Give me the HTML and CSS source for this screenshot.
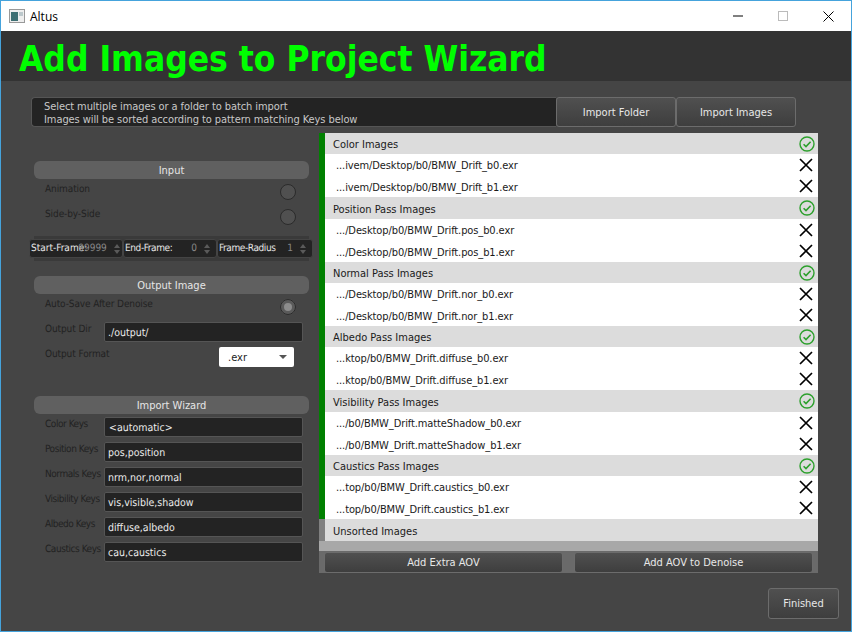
FILE: index.html
```html
<!DOCTYPE html>
<html lang="en">

<head>
    <meta charset="UTF-8">
    <meta name="viewport" content="width=device-width, initial-scale=1.0">
    <title>Altus</title>
    <link rel="stylesheet" href="styles.css">
</head>

<body>
    <svg class="defs" width="0" height="0">
        <symbol id="ok" viewBox="0 0 16 16">
            <circle cx="8" cy="8" r="7" fill="none" stroke="#2ca02c" stroke-width="1.4"/>
            <path d="M4.6 8.2 7 10.6 11.6 5.8" fill="none" stroke="#2ca02c" stroke-width="1.6"/>
        </symbol>
        <symbol id="del" viewBox="0 0 14 14">
            <path d="M1 1 13 13M13 1 1 13" fill="none" stroke="#000" stroke-width="1.7"/>
        </symbol>
    </svg>

    <div class="window">

        <div class="titlebar">
            <svg class="app-icon" width="16" height="16" viewBox="0 0 16 16">
                <rect x="0.5" y="1.5" width="15" height="13" fill="#eee" stroke="#999"/>
                <rect x="2" y="4" width="7" height="9" fill="#3d6f73"/>
                <rect x="10" y="4" width="4" height="4" fill="#bcc8cc"/>
            </svg>
            <span class="app-name">Altus</span>
            <div class="win-btns">
                <svg width="10" height="10" viewBox="0 0 10 10"><path d="M0 5H10" stroke="#000"/></svg>
                <svg width="10" height="10" viewBox="0 0 10 10"><rect x="0.5" y="0.5" width="9" height="9" fill="none" stroke="#bbb"/></svg>
                <svg width="11" height="11" viewBox="0 0 11 11"><path d="M0.5 0.5 10.5 10.5M10.5 0.5 0.5 10.5" stroke="#000"/></svg>
            </div>
        </div>

        <div class="banner">
            <h1>Add Images to Project Wizard</h1>
        </div>

        <main class="content">

            <div class="import-bar">
                <p class="import-help">Select multiple images or a folder to batch import<br>Images will be sorted according to pattern matching Keys below</p>
                <button class="btn import-btn">Import Folder</button>
                <button class="btn import-btn">Import Images</button>
            </div>

            <div class="columns">

                <div class="side">

                    <div class="section-head">Input</div>
                    <div class="check-row"><span class="label">Animation</span><span class="radio"></span></div>
                    <div class="check-row"><span class="label">Side-by-Side</span><span class="radio"></span></div>

                    <div class="spin-strip">
                        <div class="spin spin-start"><span class="spin-name">Start-Frame:</span><span class="spin-val">99999</span><span class="arrows"></span></div>
                        <div class="spin"><span class="spin-name">End-Frame:</span><span class="spin-val">0</span><span class="arrows"></span></div>
                        <div class="spin spin-last"><span class="spin-name">Frame-Radius</span><span class="spin-val">1</span><span class="arrows"></span></div>
                    </div>

                    <div class="section-head sec-output">Output Image</div>
                    <div class="check-row"><span class="label">Auto-Save After Denoise</span><span class="radio on"></span></div>
                    <div class="field-row"><span class="label">Output Dir</span><div class="input">./output/</div></div>
                    <div class="field-row format-row">
                        <span class="label">Output Format</span>
                        <div class="combo"><span>.exr</span><span class="combo-arrow"></span></div>
                    </div>

                    <div class="section-head sec-wizard">Import Wizard</div>
                    <div class="field-row key-row"><span class="label">Color Keys</span><div class="input indent">&lt;automatic&gt;</div></div>
                    <div class="field-row key-row"><span class="label">Position Keys</span><div class="input">pos,position</div></div>
                    <div class="field-row key-row"><span class="label">Normals Keys</span><div class="input">nrm,nor,normal</div></div>
                    <div class="field-row key-row"><span class="label">Visibility Keys</span><div class="input">vis,visible,shadow</div></div>
                    <div class="field-row key-row"><span class="label">Albedo Keys</span><div class="input">diffuse,albedo</div></div>
                    <div class="field-row key-row"><span class="label">Caustics Keys</span><div class="input">cau,caustics</div></div>

                </div>

                <div class="list-panel">
                    <div class="list">

                        <section class="group">
                            <div class="group-head"><span>Color Images</span><svg class="ok-icon"><use href="#ok"/></svg></div>
                            <div class="file"><span>...ivem/Desktop/b0/BMW_Drift_b0.exr</span><svg class="del-icon"><use href="#del"/></svg></div>
                            <div class="file"><span>...ivem/Desktop/b0/BMW_Drift_b1.exr</span><svg class="del-icon"><use href="#del"/></svg></div>
                        </section>

                        <section class="group tall">
                            <div class="group-head"><span>Position Pass Images</span><svg class="ok-icon"><use href="#ok"/></svg></div>
                            <div class="file"><span>.../Desktop/b0/BMW_Drift.pos_b0.exr</span><svg class="del-icon"><use href="#del"/></svg></div>
                            <div class="file"><span>.../Desktop/b0/BMW_Drift.pos_b1.exr</span><svg class="del-icon"><use href="#del"/></svg></div>
                        </section>

                        <section class="group">
                            <div class="group-head"><span>Normal Pass Images</span><svg class="ok-icon"><use href="#ok"/></svg></div>
                            <div class="file"><span>.../Desktop/b0/BMW_Drift.nor_b0.exr</span><svg class="del-icon"><use href="#del"/></svg></div>
                            <div class="file"><span>.../Desktop/b0/BMW_Drift.nor_b1.exr</span><svg class="del-icon"><use href="#del"/></svg></div>
                        </section>

                        <section class="group">
                            <div class="group-head"><span>Albedo Pass Images</span><svg class="ok-icon"><use href="#ok"/></svg></div>
                            <div class="file"><span>...ktop/b0/BMW_Drift.diffuse_b0.exr</span><svg class="del-icon"><use href="#del"/></svg></div>
                            <div class="file"><span>...ktop/b0/BMW_Drift.diffuse_b1.exr</span><svg class="del-icon"><use href="#del"/></svg></div>
                        </section>

                        <section class="group tall">
                            <div class="group-head"><span>Visibility Pass Images</span><svg class="ok-icon"><use href="#ok"/></svg></div>
                            <div class="file"><span>.../b0/BMW_Drift.matteShadow_b0.exr</span><svg class="del-icon"><use href="#del"/></svg></div>
                            <div class="file"><span>.../b0/BMW_Drift.matteShadow_b1.exr</span><svg class="del-icon"><use href="#del"/></svg></div>
                        </section>

                        <section class="group">
                            <div class="group-head"><span>Caustics Pass Images</span><svg class="ok-icon"><use href="#ok"/></svg></div>
                            <div class="file"><span>...top/b0/BMW_Drift.caustics_b0.exr</span><svg class="del-icon"><use href="#del"/></svg></div>
                            <div class="file"><span>...top/b0/BMW_Drift.caustics_b1.exr</span><svg class="del-icon"><use href="#del"/></svg></div>
                        </section>

                        <section class="group unsorted">
                            <div class="group-head"><span>Unsorted Images</span></div>
                        </section>

                    </div>
                    <div class="aov-btns">
                        <button class="btn aov-btn">Add Extra AOV</button>
                        <button class="btn aov-btn">Add AOV to Denoise</button>
                    </div>
                </div>

            </div>

            <div class="footer">
                <button class="btn finish-btn">Finished</button>
            </div>

        </main>

    </div>
</body>

</html>
```

FILE: styles.css
```css
* {
    margin: 0;
    padding: 0;
    box-sizing: border-box;
}

body {
    width: 852px;
    height: 632px;
    overflow: hidden;
    font-family: "DejaVu Sans Condensed", "DejaVu Sans", sans-serif;
    font-size: 11px;
    color: #e6e6e6;
}

.defs {
    display: block;
    height: 0;
}

.window {
    display: flex;
    flex-direction: column;
    width: 852px;
    height: 632px;
    border: 1px solid #45a3dc;
    background-color: #454545;
}

/* title bar */
.titlebar {
    display: flex;
    align-items: center;
    flex: 0 0 30px;
    background-color: white;
    color: black;
}

.app-icon {
    margin-left: 8px;
}

.app-name {
    margin-left: 5px;
    font-family: "Open Sans", sans-serif;
    font-size: 12px;
}

.win-btns {
    display: flex;
    align-items: center;
    gap: 35px;
    margin-left: auto;
    margin-right: 17px;
}

/* banner */
.banner {
    display: flex;
    align-items: center;
    flex: 0 0 50px;
    padding: 5px 0 0 18px;
    background-color: #333333;
}

h1 {
    font-size: 35px;
    font-weight: bold;
    color: #00ff00;
    white-space: nowrap;
}

.content {
    flex: 1;
    padding-top: 16px;
}

/* buttons */
.btn {
    border: 1px solid #6c6c6c;
    border-radius: 3px;
    background: linear-gradient(#505050, #3e3e3e);
    color: #e8e8e8;
    font-family: inherit;
    font-size: 11px;
}

/* import bar */
.import-bar {
    display: flex;
    height: 30px;
    margin-left: 30px;
}

.import-help {
    width: 525px;
    padding: 2px 0 0 12px;
    border: 1px solid #555555;
    border-right: none;
    border-radius: 4px 0 0 4px;
    background-color: #232323;
    color: #c8c8c8;
    line-height: 13px;
    letter-spacing: -0.08px;
}

.import-btn {
    width: 120px;
}

.columns {
    display: flex;
    margin-top: 6px;
}

/* left column */
.side {
    width: 275px;
    margin-left: 33px;
    padding-top: 28px;
}

.section-head {
    height: 18px;
    border-radius: 6px;
    background-color: #606060;
    text-align: center;
    line-height: 19px;
}

.sec-output {
    margin-top: 15px;
}

.sec-wizard {
    margin-top: 27px;
}

.label {
    color: #222222;
    font-size: 10px;
    line-height: 17px;
    letter-spacing: -0.1px;
    text-rendering: geometricPrecision;
    white-space: nowrap;
}

.check-row {
    display: flex;
    justify-content: space-between;
    height: 25px;
    padding: 2px 13px 0 11px;
}

.radio {
    width: 16px;
    height: 16px;
    margin-top: 3px;
    border: 1px solid #2b2b2b;
    border-radius: 50%;
    background-color: #505050;
}

.radio.on {
    border: 4px solid #5a5a5a;
    outline: 1px solid #2b2b2b;
    outline-offset: -1px;
    background-color: #8c8c8c;
}

/* spin boxes */
.spin-strip {
    display: flex;
    height: 25px;
    margin: 7px -4px 0 -5px;
    padding-top: 3px;
    background: linear-gradient(90deg, transparent 5px, #3a3a3a 5px, #3a3a3a 280px, transparent 280px);
}

.spin {
    display: flex;
    align-items: center;
    flex: 0 0 94px;
    min-width: 0;
    height: 19px;
    padding: 0 6px 0 1px;
    border: 1px solid #444444;
    border-radius: 3px;
    background-color: #232323;
    font-size: 10px;
    text-rendering: geometricPrecision;
}

.spin-last {
    flex-basis: 96px;
}

.spin-name {
    white-space: nowrap;
}

.spin + .spin .spin-name {
    letter-spacing: -0.4px;
}

.spin-val {
    margin-left: auto;
    color: #888888;
}

.spin-start .spin-val {
    margin-left: -9px;
}

.arrows {
    display: flex;
    flex-direction: column;
    gap: 2px;
    margin-left: 7px;
}

.arrows::before,
.arrows::after {
    content: "";
    border-left: 3.5px solid transparent;
    border-right: 3.5px solid transparent;
}

.arrows::before {
    border-bottom: 4px solid #5a5a5a;
}

.arrows::after {
    border-top: 4px solid #5a5a5a;
}

/* fields */
.field-row {
    display: flex;
    height: 25px;
    padding: 2px 6px 0 11px;
}

.field-row .label {
    flex: 0 0 59px;
    min-width: 0;
}

.key-row .label {
    letter-spacing: -0.45px;
}

.input {
    flex: 1;
    height: 20px;
    margin-top: 1px;
    padding-left: 3px;
    border: 1px solid #555555;
    border-radius: 2px;
    background-color: #232323;
    color: #ececec;
    font-size: 10.5px;
    text-rendering: geometricPrecision;
    line-height: 20px;
}

.indent {
    padding-left: 4px;
}

.format-row {
    justify-content: space-between;
    padding-right: 15px;
}

.format-row .label {
    flex: none;
}

.combo {
    display: flex;
    justify-content: space-between;
    align-items: center;
    width: 75px;
    height: 20px;
    margin-top: 1px;
    padding: 0 7px 0 9px;
    border-radius: 2px;
    background-color: white;
    color: #222222;
}

.combo-arrow {
    border-left: 4px solid transparent;
    border-right: 4px solid transparent;
    border-top: 4px solid #555555;
}

/* image list */
.list-panel {
    width: 499px;
    height: 440px;
    margin-left: 10px;
    background-color: #6a6a6a;
}

.list {
    height: 418px;
    background-color: #a8a8a8;
}

.group {
    height: 64px;
    border-left: 6px solid #008000;
    background-color: white;
    color: #1a1a1a;
}

.group.tall {
    height: 65px;
}

.group.unsorted {
    height: 22px;
    border-left-color: #808080;
}

.group-head {
    display: flex;
    justify-content: space-between;
    align-items: center;
    height: 21px;
    padding: 0 3px 0 8px;
    background-color: #dcdcdc;
}

.tall .group-head,
.unsorted .group-head {
    height: 22px;
}

.file {
    display: flex;
    justify-content: space-between;
    align-items: center;
    height: 21.5px;
    padding: 0 5px 0 11px;
    letter-spacing: -0.1px;
}

.group-head span,
.file span {
    padding-top: 2px;
}

.ok-icon {
    width: 16px;
    height: 16px;
}

.del-icon {
    width: 14px;
    height: 14px;
}

.aov-btns {
    display: flex;
    justify-content: space-between;
    padding: 1px 5px 0;
}

.aov-btn {
    width: 239px;
    height: 21px;
}

/* footer */
.footer {
    display: flex;
    justify-content: flex-end;
    margin-top: 15px;
    padding-right: 12px;
}

.finish-btn {
    width: 71px;
    height: 31px;
}
```
